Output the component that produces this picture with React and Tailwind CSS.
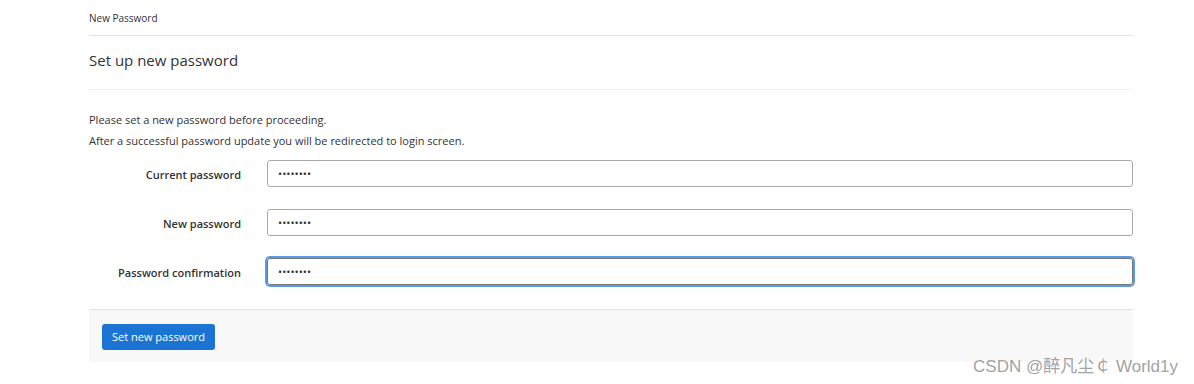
import { useState } from "react";

const fields = [
  { id: "current", label: "Current password" },
  { id: "new", label: "New password" },
  { id: "confirm", label: "Password confirmation", focused: true },
];

const App = () => {
  const [values, setValues] = useState({
    current: "password",
    new: "password",
    confirm: "password",
  });

  return (
    <div className="relative w-[1194px] h-[384px] bg-white font-['Open_Sans',sans-serif] text-[#333]">
      <div className="ml-[89px] w-[1044px]">
        {/* breadcrumb */}
        <div className="h-[36px] pt-[11px] text-[10px] border-b border-[#e2e2e2]">
          New Password
        </div>

        {/* title */}
        <div className="h-[54px] pt-[13px] text-[15px] border-b border-[#efefef]">
          Set up new password
        </div>

        {/* body */}
        <div className="pt-[19px] text-[11px] leading-[21px]">
          <p>Please set a new password before proceeding.</p>
          <p>After a successful password update you will be redirected to login screen.</p>
        </div>

        <form className="mt-[9px] flex flex-col gap-[22px]">
          {fields.map((f) => (
            <div key={f.id} className="flex items-center">
              <label className="w-[152px] pt-[4px] text-right text-[11px] font-semibold">
                {f.label}
              </label>
              <input
                type="password"
                value={values[f.id]}
                onChange={(e) => setValues({ ...values, [f.id]: e.target.value })}
                className={
                  f.focused
                    ? "ml-[26px] flex-1 h-[27px] px-[10px] text-[11px] rounded-[3px] border border-[#777] outline-none shadow-[0_0_0_2px_#5b9be6]"
                    : "ml-[26px] flex-1 h-[27px] px-[10px] text-[11px] rounded-[3px] border border-[#aaa] outline-none"
                }
              />
            </div>
          ))}
        </form>

        {/* footer */}
        <div className="mt-[24px] h-[53px] bg-[#f8f8f8] border-t border-[#e2e2e2] pl-[13px] pt-[13px]">
          <button
            type="button"
            className="h-[26px] px-[10px] rounded-[3px] bg-[#1b73d3] text-white text-[11px]"
          >
            Set new password
          </button>
        </div>
      </div>

      <div className="absolute right-[16px] bottom-[5px] text-[17px] text-[#a3a3a3] font-['Liberation_Sans','Noto_Sans_CJK_SC',sans-serif]">
        CSDN @醉凡尘￠ World1y
      </div>
    </div>
  );
};

export default App;
